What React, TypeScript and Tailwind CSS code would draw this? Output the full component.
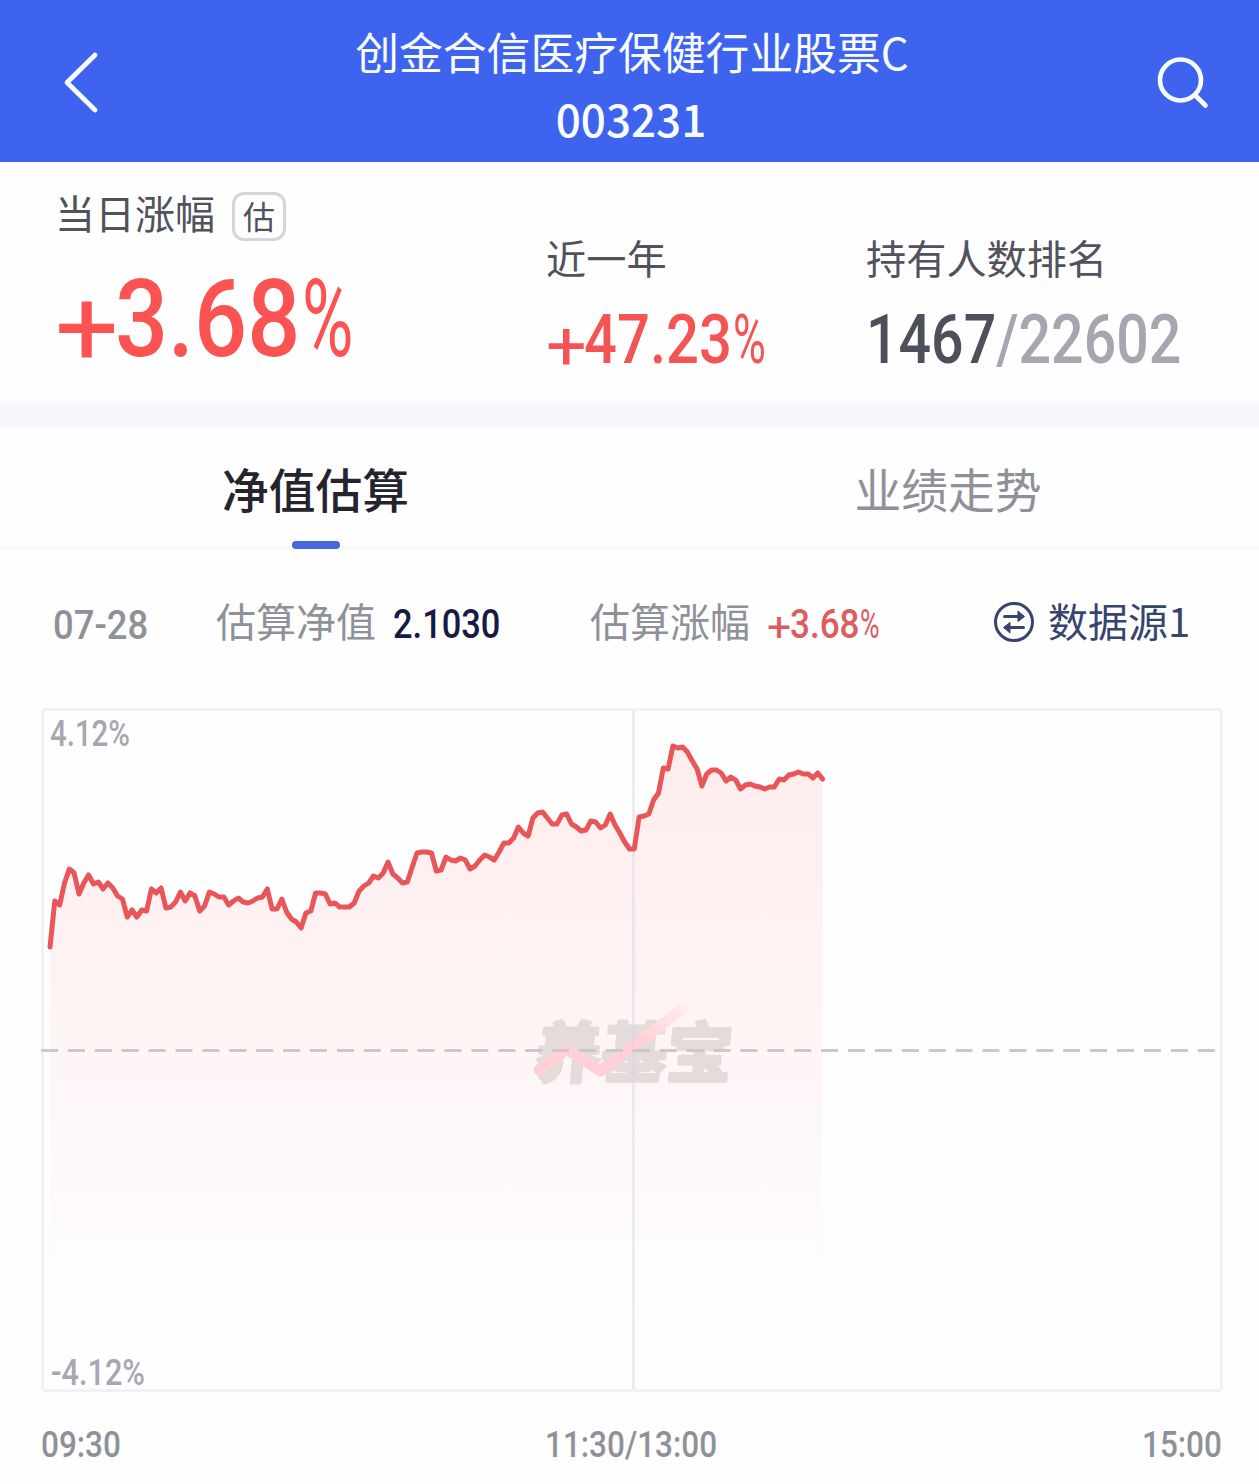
import type { ReactNode } from 'react';

// One value per minute of trading, as y positions in the chart
const PRICES = [
  947, 901, 905, 883, 869, 873, 894, 883, 875, 884, 882, 889, 883, 888, 896, 899, 917, 910, 917, 910,
  911, 889, 893, 888, 908, 907, 902, 892, 901, 893, 896, 911, 906, 892, 894, 897, 897, 905, 901, 898,
  902, 903, 901, 898, 897, 889, 909, 909, 899, 912, 919, 922, 928, 913, 911, 893, 893, 894, 904, 903,
  907, 907, 907, 903, 891, 886, 883, 876, 878, 873, 862, 874, 878, 883, 882, 867, 853, 852, 852, 853,
  871, 870, 857, 860, 861, 858, 860, 869, 866, 860, 855, 857, 860, 852, 843, 843, 838, 827, 833, 836,
  818, 813, 812, 818, 824, 824, 815, 814, 824, 827, 831, 830, 821, 822, 828, 825, 814, 825, 833, 842,
  849, 849, 817, 816, 814, 800, 793, 768, 769, 746, 748, 747, 752, 761, 769, 786, 774, 770, 770, 773,
  781, 777, 780, 789, 785, 784, 786, 787, 789, 787, 787, 779, 780, 775, 774, 772, 774, 774, 778, 773,
  779,
];

const START_X = 50;
const STEP_X = 4.829;

const linePath = PRICES.map((y, i) => `${i === 0 ? 'M' : 'L'}${(START_X + i * STEP_X).toFixed(1)} ${y}`).join('');
const endX = START_X + (PRICES.length - 1) * STEP_X;
const areaPath = `${linePath}L${endX.toFixed(1)} 1390L${START_X} 1390Z`;

function Num({ className, children }: { className: string; children: ReactNode }) {
  return (
    <span className={`block shrink-0 origin-left whitespace-nowrap font-[Roboto,sans-serif] leading-none ${className}`}>
      {children}
    </span>
  );
}

// Percent change: wide light sign, condensed digits, narrow percent sign
function Change({ value, digits, className }: { value: string; digits: string; className: string }) {
  return (
    <div className={`flex whitespace-nowrap font-[Roboto,sans-serif] leading-none ${className}`}>
      <span className="mt-[0.085em] block w-[0.555em] origin-left scale-x-[1.04] font-normal">+</span>
      <span className={`block origin-left font-medium ${digits}`}>{value}</span>
      <span className="block w-[0.47em] origin-left scale-x-[0.65] font-normal">%</span>
    </div>
  );
}

function Header() {
  return (
    <header className="flex h-[162px] items-start justify-between bg-[#3e64ef] text-[#f8fbff]">
      <svg className="ml-[60px] mt-[48px] h-[68px] w-[44px]" viewBox="0 0 44 68" fill="none">
        <path d="M35 7L7 34.500L35 62" stroke="currentColor" strokeWidth="4.800" strokeLinecap="round" strokeLinejoin="round" />
      </svg>
      <div className="ml-[6px] text-center">
        <h1 className="mt-[18px] text-[43.800px] font-normal leading-[66px]">创金合信医疗保健行业股票C</h1>
        <p className="pr-[2px] pt-px text-[44px] font-medium leading-[66px]">003231</p>
      </div>
      <svg className="mr-[45px] mt-[52px] h-[60px] w-[60px]" viewBox="0 0 60 60" fill="none">
        <circle cx="26.500" cy="28" r="20.500" stroke="currentColor" strokeWidth="4.600" />
        <path d="M41 43L51.500 53.500" stroke="currentColor" strokeWidth="4.600" strokeLinecap="round" />
      </svg>
    </header>
  );
}

function Summary() {
  return (
    <section className="flex h-[239px] text-[#50525c]">
      <div className="w-[490px] pl-[55px] pt-[20px]">
        <div className="flex items-center">
          <span className="text-[40px] leading-[60px]">当日涨幅</span>
          <span className="ml-[17px] mt-[9px] flex h-[49px] w-[54px] items-center justify-center rounded-[12px] border-3 border-[#d4d5da] pb-[4px] text-[32px] leading-none">
            估
          </span>
        </div>
        <Change value="3.68" digits="w-[1.73em] scale-x-[0.865]" className="mt-[23px] text-[108px] text-[#fb5252]" />
      </div>
      <div className="w-[320px] pl-[56px] pt-[65px]">
        <div className="text-[40.200px] leading-[60px]">近一年</div>
        <Change value="47.23" digits="w-[2.15em] scale-x-[0.84]" className="mt-[18px] text-[69px] text-[#f35555]" />
      </div>
      <div className="pl-[56px] pt-[65px]">
        <div className="text-[40.200px] leading-[60px]">持有人数排名</div>
        <Num className="mt-[18px] scale-x-[0.83] text-[69px] font-medium text-[#4d4f5b]">
          1467<span className="text-[#a5a6b0]">/22602</span>
        </Num>
      </div>
    </section>
  );
}

function Tabs() {
  return (
    <nav className="flex h-[121px] border-b-3 border-[#f8f8fa] text-[46.800px] leading-[70px]">
      <div className="flex w-[631px] flex-col items-center pt-[25px]">
        <span className="font-medium text-[#23242e]">净值估算</span>
        <span className="mt-[18px] h-[8px] w-[48px] shrink-0 rounded-[4px] bg-[#4466df]" />
      </div>
      <div className="flex flex-1 justify-center pl-[6px] pt-[25px] text-[#8f9199]">业绩走势</div>
    </nav>
  );
}

function Quote() {
  return (
    <section className="flex h-[159px] pt-[41px] text-[40px] leading-[60px] text-[#8f9199]">
      <div className="w-[216px] pl-[53px] pt-[15px]">
        <Num className="scale-x-[0.9] text-[40.500px] font-medium">07-28</Num>
      </div>
      <div className="flex w-[374px]">
        <span>估算净值</span>
        <Num className="ml-[17px] mt-[14px] scale-x-[0.84] text-[41px] font-medium text-[#171a42]">2.1030</Num>
      </div>
      <div className="flex w-[402px]">
        <span>估算涨幅</span>
        <Change value="3.68" digits="w-[1.71em] scale-x-[0.855]" className="ml-[17px] mt-[14px] text-[41px] text-[#dc5d5f]" />
      </div>
      <div className="flex text-[#36446e]">
        <svg className="mr-[12px] mt-[10px] h-[44px] w-[44px]" viewBox="0 0 44 44" fill="none" stroke="currentColor">
          <circle cx="22" cy="22" r="18.500" strokeWidth="3" />
          <path d="M12.500 16.500H30M31.500 27.500H14" strokeWidth="3" strokeLinecap="round" />
          <path d="M26 11L32.500 16.500L26 21.500ZM18 33L11.500 27.500L18 22.500Z" fill="currentColor" strokeWidth="1" />
        </svg>
        <span>数据源1</span>
      </div>
    </section>
  );
}

function Watermark() {
  return (
    <g>
      <text
        x="0"
        y="0"
        transform="translate(534 1077) skewX(-5)"
        fontSize="65.500"
        fontWeight="700"
        fill="#e4dbdb"
        stroke="#e4dbdb"
        strokeWidth="3.500"
        strokeLinecap="round"
        strokeLinejoin="round"
      >
        养基宝
      </text>
      <path
        d="M539 1070L567 1049L600 1071L684 1008"
        fill="none"
        stroke="url(#arrow)"
        strokeWidth="11"
        strokeLinecap="round"
        strokeLinejoin="round"
      />
    </g>
  );
}

function Chart() {
  return (
    <section className="px-[41px]">
      <svg className="block h-[694px] w-[1182px]" viewBox="41 708 1182 694" fill="none">
        <defs>
          <linearGradient id="area" gradientUnits="userSpaceOnUse" x1="0" y1="746" x2="0" y2="1340">
            <stop offset="0" stopColor="#ff4c50" stopOpacity="0.1" />
            <stop offset="1" stopColor="#ff4c50" stopOpacity="0" />
          </linearGradient>
          <linearGradient id="arrow" gradientUnits="userSpaceOnUse" x1="640" y1="1040" x2="690" y2="1005">
            <stop offset="0" stopColor="#ffd0d5" />
            <stop offset="1" stopColor="#fff0f0" />
          </linearGradient>
        </defs>
        <path d={areaPath} fill="url(#area)" />
        <Watermark />
        <rect x="42.500" y="709.500" width="1179" height="681" rx="4" stroke="#f1f1f6" strokeWidth="3" />
        <path d="M633.500 711V1389" stroke="#d8d6e6" strokeOpacity="0.450" strokeWidth="3" />
        <path d="M41 1050.500H1216" stroke="#c9c8cb" strokeWidth="3" strokeDasharray="17 9.900" />
        <path d={linePath} stroke="#e8565a" strokeWidth="5" strokeLinecap="round" strokeLinejoin="round" />
        <g fontFamily="Roboto, sans-serif" fontWeight="500" fontSize="36" fill="#a6a7af">
          <text x="50" y="746" textLength="80" lengthAdjust="spacingAndGlyphs">4.12%</text>
          <text x="51" y="1385" textLength="94" lengthAdjust="spacingAndGlyphs">-4.12%</text>
        </g>
      </svg>
      <div className="flex pt-[24px] text-[37.500px] font-medium text-[#8f9199]">
        <div className="w-[504px] shrink-0">
          <Num className="scale-x-[0.84]">09:30</Num>
        </div>
        <div className="w-[597px] shrink-0">
          <Num className="scale-x-[0.84]">11:30/13:00</Num>
        </div>
        <div className="w-[81px] shrink-0">
          <Num className="scale-x-[0.84]">15:00</Num>
        </div>
      </div>
    </section>
  );
}

export default function App() {
  return (
    <main className="h-[1484px] w-[1259px] overflow-hidden bg-[#fefefe] font-['Noto_Sans_CJK_SC',sans-serif]">
      <Header />
      <Summary />
      <div className="h-[27px] bg-[#f6f8fc]" />
      <Tabs />
      <Quote />
      <Chart />
    </main>
  );
}
